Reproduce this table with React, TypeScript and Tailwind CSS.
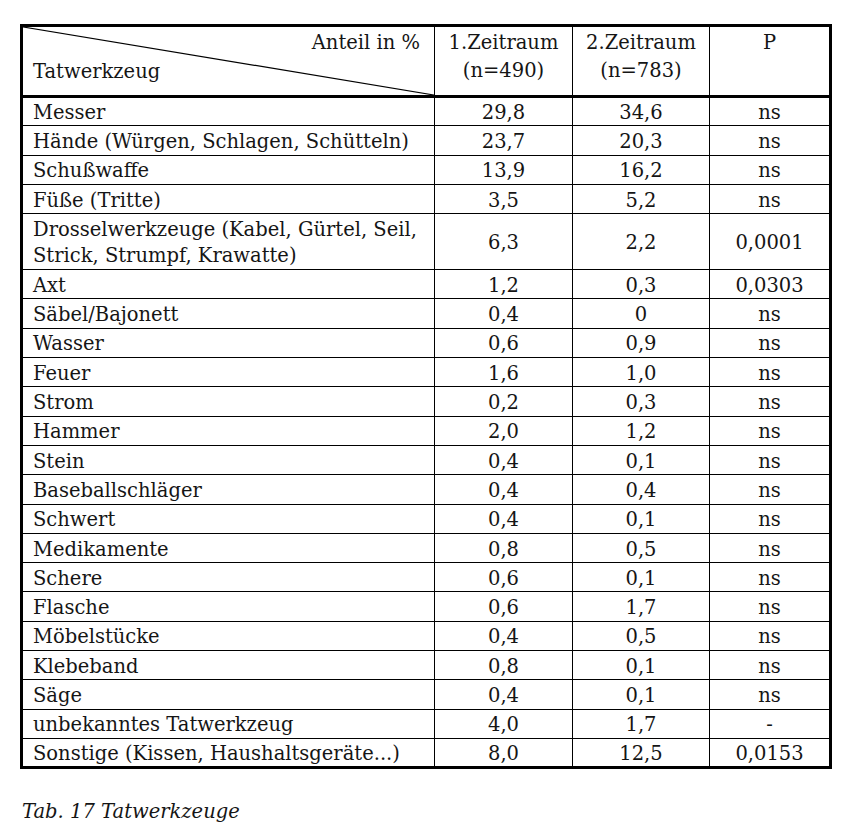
import React from 'react';

const rows: [string[], string, string, string][] = [
  [['Messer'], '29,8', '34,6', 'ns'],
  [['Hände (Würgen, Schlagen, Schütteln)'], '23,7', '20,3', 'ns'],
  [['Schußwaffe'], '13,9', '16,2', 'ns'],
  [['Füße (Tritte)'], '3,5', '5,2', 'ns'],
  [['Drosselwerkzeuge (Kabel, Gürtel, Seil,', 'Strick, Strumpf, Krawatte)'], '6,3', '2,2', '0,0001'],
  [['Axt'], '1,2', '0,3', '0,0303'],
  [['Säbel/Bajonett'], '0,4', '0', 'ns'],
  [['Wasser'], '0,6', '0,9', 'ns'],
  [['Feuer'], '1,6', '1,0', 'ns'],
  [['Strom'], '0,2', '0,3', 'ns'],
  [['Hammer'], '2,0', '1,2', 'ns'],
  [['Stein'], '0,4', '0,1', 'ns'],
  [['Baseballschläger'], '0,4', '0,4', 'ns'],
  [['Schwert'], '0,4', '0,1', 'ns'],
  [['Medikamente'], '0,8', '0,5', 'ns'],
  [['Schere'], '0,6', '0,1', 'ns'],
  [['Flasche'], '0,6', '1,7', 'ns'],
  [['Möbelstücke'], '0,4', '0,5', 'ns'],
  [['Klebeband'], '0,8', '0,1', 'ns'],
  [['Säge'], '0,4', '0,1', 'ns'],
  [['unbekanntes Tatwerkzeug'], '4,0', '1,7', '-'],
  [['Sonstige (Kissen, Haushaltsgeräte...)'], '8,0', '12,5', '0,0153'],
];

const App = () => {
  return (
    <div className="min-h-[839px] bg-white pl-[20px] pt-[24px] text-[#151515] font-['DejaVu_Serif','Liberation_Serif',serif] text-[19.5px] leading-[24px]">
      <table className="table-fixed border-collapse border-[3px] border-black w-[809px]">
        <colgroup>
          <col className="w-[413px]" />
          <col className="w-[138px]" />
          <col className="w-[137px]" />
          <col className="w-[121px]" />
        </colgroup>
        <thead>
          <tr className="h-[71px] border-b-[3px] border-black">
            <th className="relative p-0 font-normal align-top">
              <svg className="absolute inset-0 w-full h-full" preserveAspectRatio="none" viewBox="0 0 100 100">
                <line x1="0" y1="0" x2="100" y2="100" stroke="black" strokeWidth="1.2" vectorEffect="non-scaling-stroke" />
              </svg>
              <div className="flex flex-col pl-[10px] pr-[14px] pt-[4px]">
                <span className="text-right">Anteil in %</span>
                <span className="text-left mt-[5px]">Tatwerkzeug</span>
              </div>
            </th>
            <th className="border-l border-black font-normal align-top pt-[4px]">
              <div>1.Zeitraum</div>
              <div className="mt-[4px]">(n=490)</div>
            </th>
            <th className="border-l border-black font-normal align-top pt-[4px]">
              <div>2.Zeitraum</div>
              <div className="mt-[4px]">(n=783)</div>
            </th>
            <th className="border-l border-black font-normal align-top pt-[4px]">P</th>
          </tr>
        </thead>
        <tbody>
          {rows.map(([label, a, b, p], i) => (
            <tr
              key={i}
              className={`border-t border-black ${label.length > 1 ? 'h-[54px]' : 'h-[29.3px]'}`}
            >
              <td className={`pl-[10px] pt-[3px] pb-0 align-middle ${label.length > 1 ? 'leading-[26px]' : ''}`}>
                {label.map((l) => (
                  <div key={l}>{l}</div>
                ))}
              </td>
              <td className="border-l border-black text-center align-middle pt-[3px]">{a}</td>
              <td className="border-l border-black text-center align-middle pt-[3px]">{b}</td>
              <td className="border-l border-black text-center align-middle pt-[3px]">{p}</td>
            </tr>
          ))}
        </tbody>
      </table>
      <p className="mt-[31px] pl-[2px] italic">Tab. 17 Tatwerkzeuge</p>
    </div>
  );
};

export default App;
